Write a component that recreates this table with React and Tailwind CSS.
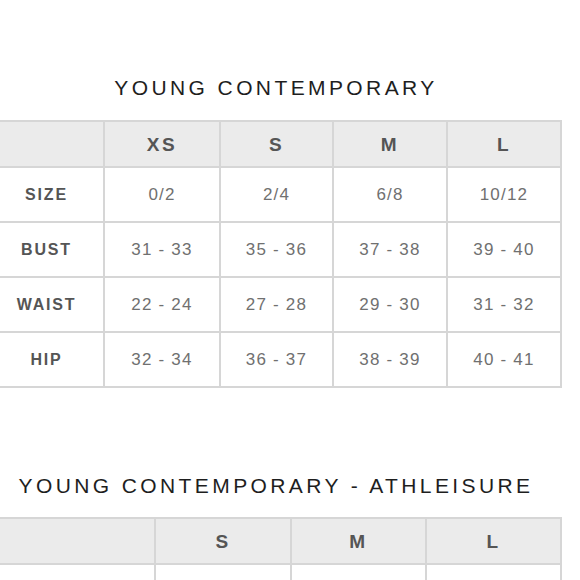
const YC = {
  cols: ['XS', 'S', 'M', 'L'],
  widths: 'grid-cols-[113px_114px_111px_112px_112px]',
  rows: [
    ['SIZE', '0/2', '2/4', '6/8', '10/12'],
    ['BUST', '31 - 33', '35 - 36', '37 - 38', '39 - 40'],
    ['WAIST', '22 - 24', '27 - 28', '29 - 30', '31 - 32'],
    ['HIP', '32 - 34', '36 - 37', '38 - 39', '40 - 41'],
  ],
}

const ATH = {
  cols: ['S', 'M', 'L'],
  widths: 'grid-cols-[164px_134px_133px_133px]',
  rows: [['', '', '', '']],
}

function SizeTable({ data }) {
  return (
    <div className={`grid ${data.widths} gap-[2px] bg-[#d6d6d6] py-[2px] pr-[2px] w-max`}>
      <div className="h-[44px] bg-[#ebebeb]" />
      {data.cols.map(c => (
        <div key={c} className="h-[44px] pt-[2px] bg-[#ebebeb] flex items-center justify-center text-[19px] font-bold tracking-[2.5px] text-[#555]">
          {c}
        </div>
      ))}
      {data.rows.map((r, i) =>
        r.map((v, j) => (
          <div
            key={i + '-' + j}
            className={`h-[53px] bg-white flex items-center justify-center ${
              j === 0 ? 'text-[16px] font-bold tracking-[1.8px] text-[#555]' : 'text-[17px] tracking-[1.2px] text-[#707070]'
            }`}
          >
            {v}
          </div>
        ))
      )}
    </div>
  )
}

export default function App() {
  return (
    <main className="w-[580px] h-[580px] overflow-hidden bg-white font-['Liberation_Sans',Arial,sans-serif]">
      <div className="ml-[-10px] w-[572px] pt-[76px]">
        <h1 className="h-[24px] leading-[24px] text-center text-[21px] tracking-[3.4px] text-[#1e1e1e] font-normal">
          YOUNG CONTEMPORARY
        </h1>
        <div className="mt-[20px]">
          <SizeTable data={YC} />
        </div>

        <h2 className="mt-[86px] h-[24px] leading-[24px] text-center text-[21px] tracking-[3.4px] text-[#1e1e1e] font-normal">
          YOUNG CONTEMPORARY - ATHLEISURE
        </h2>
        <div className="mt-[19px]">
          <SizeTable data={ATH} />
        </div>
      </div>
    </main>
  )
}
